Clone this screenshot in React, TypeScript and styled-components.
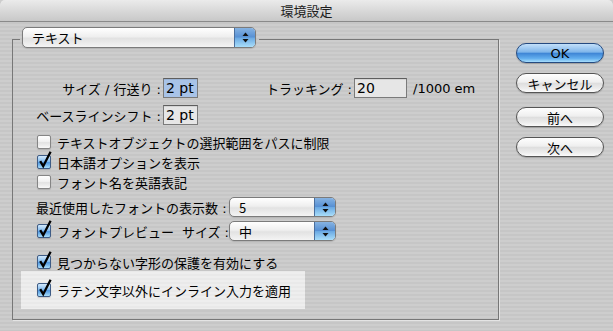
import React from "react";
import styled, { createGlobalStyle, css } from "styled-components";

const stripes = css`
  background-color: #c9c9c9;
  background-image: repeating-linear-gradient(
    to bottom,
    #cdcdcd 0px,
    #cdcdcd 2px,
    #c6c6c6 2px,
    #c6c6c6 4px
  );
  background-attachment: fixed;
`;

const GlobalStyle = createGlobalStyle`
  html, body { margin: 0; padding: 0; }
  body {
    width: 613px;
    height: 331px;
    overflow: hidden;
    font-family: "DejaVu Sans", "Noto Sans CJK JP", sans-serif;
    font-size: 13px;
    color: #000;
  }
`;

const Window = styled.div`
  width: 613px;
  height: 331px;
  ${stripes};
  display: flex;
  flex-direction: column;
`;

const TitleBar = styled.div`
  height: 21px;
  flex: none;
  border-bottom: 1px solid #8a8a8a;
  background: linear-gradient(to bottom, #ebebeb 0%, #d9d9d9 50%, #c8c8c8 100%);
  display: flex;
  align-items: center;
  justify-content: center;
  font-family: "Noto Sans CJK JP", sans-serif;
  font-size: 13px;
  color: #1c1c1c;
  border-radius: 5px 5px 0 0;
`;

const Body = styled.div`
  display: flex;
  align-items: flex-start;
  padding: 5px 0 0 12px;
`;

const Group = styled.div`
  margin-top: 12px;
  width: 485px;
  height: 279px;
  border: 1px solid #777777;
  box-shadow: 1px 1px 0 #e4e4e4;
  display: flex;
  flex-direction: column;
`;

const GroupHeader = styled.div`
  align-self: flex-start;
  margin: -13px 0 0 7px;
  padding: 0 3px 0 2px;
  ${stripes};
`;

const PopupBox = styled.div<{ $w: number; $h: number }>`
  width: ${(p) => p.$w}px;
  height: ${(p) => p.$h}px;
  box-sizing: border-box;
  border: 1px solid #7b7b7b;
  border-radius: 5px;
  background: linear-gradient(
    to bottom,
    #ffffff 0%,
    #efefef 45%,
    #e2e2e2 55%,
    #f4f4f4 100%
  );
  box-shadow: 0 1px 1px rgba(0, 0, 0, 0.12);
  display: flex;
  align-items: stretch;
  overflow: hidden;
  flex: none;
`;

const PopupText = styled.span`
  flex: 1;
  display: flex;
  align-items: center;
  padding-left: 9px;
  font-family: "Noto Sans CJK JP", sans-serif;
  white-space: nowrap;
`;

const PopupArrows = styled.span`
  width: 20px;
  border-left: 1px solid #4a6f9e;
  background: linear-gradient(
    to bottom,
    #86b3e2 0%,
    #5790d4 48%,
    #6aa9e3 52%,
    #a9defa 100%
  );
  display: flex;
  align-items: center;
  justify-content: center;
`;

const Arrows = () => (
  <svg width="7" height="11" viewBox="0 0 7 11">
    <polygon points="3.5,0.5 6.5,4 0.5,4" fill="#111" />
    <polygon points="0.5,7 6.5,7 3.5,10.5" fill="#111" />
  </svg>
);

const Popup: React.FC<{ w: number; h: number; children: React.ReactNode }> = ({
  w,
  h,
  children,
}) => (
  <PopupBox $w={w} $h={h}>
    <PopupText>{children}</PopupText>
    <PopupArrows>
      <Arrows />
    </PopupArrows>
  </PopupBox>
);

const Rows = styled.div`
  display: flex;
  flex-direction: column;
  padding-left: 23px;
`;

const Row = styled.div<{ $mt: number; $h: number }>`
  display: flex;
  align-items: center;
  margin-top: ${(p) => p.$mt}px;
  height: ${(p) => p.$h}px;
  white-space: nowrap;
`;

const Label = styled.span<{ $w?: number; $ml?: number }>`
  display: flex;
  justify-content: flex-end;
  flex: none;
  width: ${(p) => (p.$w ? `${p.$w}px` : "auto")};
  margin-left: ${(p) => p.$ml ?? 0}px;
  white-space: nowrap;
`;

const Text = styled.span<{ $w?: number }>`
  flex: none;
  width: ${(p) => (p.$w ? `${p.$w}px` : "auto")};
  white-space: nowrap;
`;

const Field = styled.div<{ $w: number; $ml: number; $selected?: boolean }>`
  width: ${(p) => p.$w}px;
  height: 20px;
  margin-left: ${(p) => p.$ml}px;
  box-sizing: border-box;
  border: 1px solid #7a7a7a;
  border-top-color: #5e5e5e;
  background: #e6e6e6;
  padding: 1px 2px 0 2px;
  font-size: 14px;
  line-height: 17px;
  flex: none;
  display: flex;
  align-items: center;
  overflow: hidden;
  box-shadow: inset 0 1px 0 rgba(0, 0, 0, 0.08);
  ${(p) =>
    p.$selected &&
    css`
      background: #a8c3e8;
    `}
`;

const Unit = styled.span`
  margin-left: 6px;
  flex: none;
`;

const Box = styled.span<{ $checked?: boolean }>`
  position: relative;
  flex: none;
  width: 12px;
  height: 12px;
  margin: 0 6px 0 1px;
  border: 1px solid ${(p) => (p.$checked ? "#3e5c86" : "#858585")};
  border-radius: 2px;
  background: ${(p) =>
    p.$checked
      ? "linear-gradient(to bottom, #d3e9fb 0%, #86bdf0 45%, #4f96df 55%, #a6dcf9 100%)"
      : "linear-gradient(to bottom, #ffffff 0%, #f1f1f1 45%, #e2e2e2 55%, #f7f7f7 100%)"};
  box-shadow: 0 1px 1px rgba(0, 0, 0, 0.15);
`;

const Tick = styled.svg`
  position: absolute;
  left: -1px;
  top: -5px;
  overflow: visible;
`;

const CheckBox: React.FC<{ checked?: boolean }> = ({ checked }) => (
  <Box $checked={checked}>
    {checked && (
      <Tick width="16" height="18" viewBox="0 0 16 18">
        <path
          d="M3.2 10.2 L6.2 15.2 L13.6 0.8"
          fill="none"
          stroke="#000"
          strokeWidth="2.3"
          strokeLinejoin="miter"
        />
      </Tick>
    )}
  </Box>
);

const Highlight = styled.div`
  margin: 0 0 0 -15px;
  width: 284px;
  height: 38px;
  padding-left: 15px;
  box-sizing: border-box;
  display: flex;
  align-items: center;
  background-color: #ececec;
  background-image: repeating-linear-gradient(
    to bottom,
    #eeeeee 0px,
    #eeeeee 2px,
    #e9e9e9 2px,
    #e9e9e9 4px
  );
  background-attachment: fixed;
`;

const ButtonColumn = styled.div`
  display: flex;
  flex-direction: column;
  margin-left: 17px;
`;

const Button = styled.div<{ $mt: number; $default?: boolean }>`
  width: 88px;
  height: 20px;
  box-sizing: border-box;
  margin-top: ${(p) => p.$mt}px;
  border-radius: 10px;
  border: 1px solid #555;
  display: flex;
  align-items: center;
  justify-content: center;
  font-size: 13px;
  background: linear-gradient(
    to bottom,
    #fefefe 0%,
    #efefef 45%,
    #dedede 52%,
    #ececec 80%,
    #fbfbfb 100%
  );
  box-shadow: 0 1px 1px rgba(0, 0, 0, 0.2);
  ${(p) =>
    p.$default &&
    css`
      border-color: #254a80;
      background: linear-gradient(
        to bottom,
        #c3e0fa 0%,
        #7fb5ea 45%,
        #3f86d6 52%,
        #62aeee 80%,
        #a8defc 100%
      );
    `}
`;

export default function App() {
  return (
    <>
      <GlobalStyle />
      <Window>
        <TitleBar>環境設定</TitleBar>
        <Body>
          <Group>
            <GroupHeader>
              <Popup w={234} h={21}>
                テキスト
              </Popup>
            </GroupHeader>
            <Rows>
              <Row $mt={30} $h={20}>
                <Label $w={125}>サイズ / 行送り :</Label>
                <Field $w={35} $ml={2} $selected>
                  2 pt
                </Field>
                <Label $w={86} $ml={68}>
                  トラッキング :
                </Label>
                <Field $w={53} $ml={2}>
                  20
                </Field>
                <Unit>/1000 em</Unit>
              </Row>
              <Row $mt={7} $h={20}>
                <Label $w={125}>ベースラインシフト :</Label>
                <Field $w={35} $ml={2}>
                  2 pt
                </Field>
              </Row>
              <Row $mt={7} $h={20}>
                <CheckBox />
                <Text>テキストオブジェクトの選択範囲をパスに制限</Text>
              </Row>
              <Row $mt={0} $h={20}>
                <CheckBox checked />
                <Text>日本語オプションを表示</Text>
              </Row>
              <Row $mt={0} $h={20}>
                <CheckBox />
                <Text>フォント名を英語表記</Text>
              </Row>
              <Row $mt={5} $h={20}>
                <Text $w={193}>最近使用したフォントの表示数 :</Text>
                <Popup w={107} h={20}>
                  5
                </Popup>
              </Row>
              <Row $mt={4} $h={20}>
                <CheckBox checked />
                <Text $w={123}>フォントプレビュー</Text>
                <Label $w={49}>サイズ :</Label>
                <Popup w={107} h={20}>
                  中
                </Popup>
              </Row>
              <Row $mt={12} $h={18}>
                <CheckBox checked />
                <Text>見つからない字形の保護を有効にする</Text>
              </Row>
              <Highlight>
                <CheckBox checked />
                <Text>ラテン文字以外にインライン入力を適用</Text>
              </Highlight>
            </Rows>
          </Group>
          <ButtonColumn>
            <Button $mt={16} $default>
              OK
            </Button>
            <Button $mt={10}>キャンセル</Button>
            <Button $mt={14}>前へ</Button>
            <Button $mt={10}>次へ</Button>
          </ButtonColumn>
        </Body>
      </Window>
    </>
  );
}
